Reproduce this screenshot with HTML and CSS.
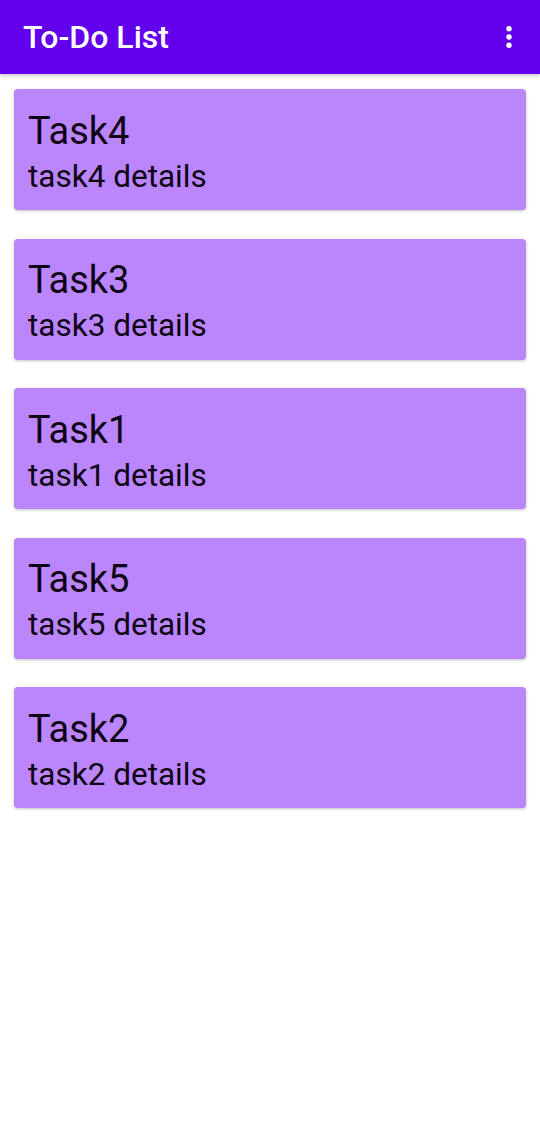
FILE: index.html
```html
<!DOCTYPE html>
<html lang="en">
<head>
    <meta charset="UTF-8">
    <meta name="viewport" content="width=device-width, initial-scale=1.0">
    <title>To-Do List</title>
    <link rel="stylesheet" href="styles.css">
</head>
<body>
    <header class="app-bar">
        <h1 class="app-title">To-Do List</h1>
        <button class="menu-button" aria-label="More options">
            <svg width="24" height="26" viewBox="0 0 24 26">
                <circle cx="12" cy="4.7" r="2.7" fill="#fff"/>
                <circle cx="12" cy="13" r="2.7" fill="#fff"/>
                <circle cx="12" cy="21.3" r="2.7" fill="#fff"/>
            </svg>
        </button>
    </header>

    <main class="task-list">
        <div class="task-card">
            <div class="task-title">Task4</div>
            <div class="task-details">task4 details</div>
        </div>
        <div class="task-card">
            <div class="task-title">Task3</div>
            <div class="task-details">task3 details</div>
        </div>
        <div class="task-card">
            <div class="task-title">Task1</div>
            <div class="task-details">task1 details</div>
        </div>
        <div class="task-card">
            <div class="task-title">Task5</div>
            <div class="task-details">task5 details</div>
        </div>
        <div class="task-card">
            <div class="task-title">Task2</div>
            <div class="task-details">task2 details</div>
        </div>
    </main>
</body>
</html>
```

FILE: styles.css
```css
body {
    margin: 0;
    font-family: Roboto, "Noto Sans", sans-serif;
    background-color: #fff;
    color: #000;
}
.app-bar {
    display: flex;
    align-items: center;
    justify-content: space-between;
    height: 74px;
    padding: 0 19px 0 23px;
    background-color: #6200ee;
    box-shadow: 0 2px 4px rgba(0, 0, 0, 0.2);
}
.app-title {
    margin: 0;
    font-size: 32px;
    font-weight: 500;
    color: #fff;
}
.menu-button {
    display: flex;
    padding: 0;
    background: none;
    border: none;
    cursor: pointer;
}
.task-list {
    display: flex;
    flex-direction: column;
    gap: 28.5px;
    padding: 15px 14px;
}
.task-card {
    height: 121px;
    box-sizing: border-box;
    padding: 17.5px 14px 0;
    background-color: #bb86fc;
    border-radius: 4px;
    box-shadow: 0 1px 3px rgba(0, 0, 0, 0.25);
}
.task-title {
    font-size: 38px;
    line-height: 48px;
    color: #0d0314;
}
.task-details {
    font-size: 31.5px;
    line-height: 43.5px;
    color: #0d0314;
}
```
